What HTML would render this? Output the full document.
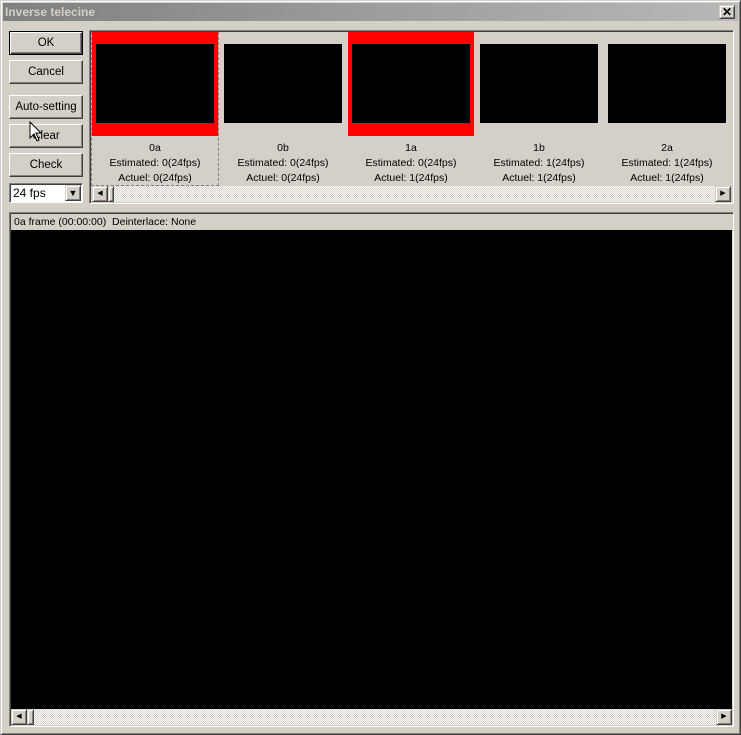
<html><head><style>
body{margin:0;width:741px;height:735px;background:#d4d0c8;font-family:"Liberation Sans",sans-serif;font-size:11px;position:relative;overflow:hidden}
.a{position:absolute}
.win{left:0;top:0;width:739px;height:733px;border:1px solid;border-color:#d4d0c8 #404040 #404040 #d4d0c8;box-shadow:inset 1px 1px #fff,inset -1px -1px #808080}
.title{left:3px;top:3px;width:735px;height:18px;background:linear-gradient(90deg,#808080,#b8b8b8);color:#d4d0c8;font-weight:bold;font-size:12px;line-height:18px;padding-left:2px;box-sizing:border-box}
.btn{left:9px;width:74px;height:24px;box-sizing:border-box;border:1px solid;border-color:#fff #404040 #404040 #fff;box-shadow:inset -1px -1px #808080;text-align:center;line-height:22px;font-size:11.5px}
.sunk{border:1px solid;border-color:#808080 #fff #fff #808080;box-shadow:inset 1px 1px #404040;box-sizing:border-box}
.thumb{width:128px;text-align:center;font-size:10.5px;line-height:15px}
.blk{background:#000}
.sb{background:repeating-conic-gradient(#fff 0 25%,#d4d0c8 0 50%) 0 0/2px 2px}
.sbtn{width:16px;height:16px;box-sizing:border-box;border:1px solid;border-color:#d4d0c8 #404040 #404040 #d4d0c8;box-shadow:inset 1px 1px #fff,inset -1px -1px #808080;background:#d4d0c8;font-size:7px;line-height:14px;text-align:center}
</style></head><body>
<div class="a win"></div>
<div class="a title">Inverse telecine</div>
<div class="a sbtn" style="left:719px;top:5px;width:16px;height:14px;font-size:12px;line-height:12px;font-weight:bold">✕</div>
<div class="a btn" style="top:31px;border:1px solid #000;box-shadow:inset 1px 1px #fff,inset -1px -1px #404040,inset -2px -2px #808080">OK</div>
<div class="a btn" style="top:60px">Cancel</div>
<div class="a btn" style="top:95px">Auto-setting</div>
<div class="a btn" style="top:124px">Clear</div>
<div class="a btn" style="top:153px">Check</div>
<div class="a" style="left:9px;top:183px;width:74px;height:20px;box-sizing:border-box;border:1px solid;border-color:#808080 #fff #fff #808080;background:#fff;box-shadow:inset 1px 1px #404040">
<span class="a" style="left:3px;top:2px;font-size:12px">24 fps</span>
<div class="a sbtn" style="right:1px;top:1px;font-size:9px">▼</div></div>
<div class="a sunk" style="left:89px;top:30px;width:645px;height:174px;overflow:hidden">
<div class="a" style="left:1px;top:1px;width:128px;height:154px;border:1px dashed #808080;box-sizing:border-box"></div>
<div class="a" style="left:2px;top:1px;width:126px;height:104px;background:red"></div>
<div class="a" style="left:258px;top:1px;width:126px;height:104px;background:red"></div>
<div class="a blk" style="left:6px;top:13px;width:118px;height:79px"></div>
<div class="a blk" style="left:134px;top:13px;width:118px;height:79px"></div>
<div class="a blk" style="left:262px;top:13px;width:118px;height:79px"></div>
<div class="a blk" style="left:390px;top:13px;width:118px;height:79px"></div>
<div class="a blk" style="left:518px;top:13px;width:118px;height:79px"></div>
<div class="a thumb" style="left:1px;top:110px">0a<br>Estimated: 0(24fps)<br>Actuel: 0(24fps)</div>
<div class="a thumb" style="left:129px;top:110px">0b<br>Estimated: 0(24fps)<br>Actuel: 0(24fps)</div>
<div class="a thumb" style="left:257px;top:110px">1a<br>Estimated: 0(24fps)<br>Actuel: 1(24fps)</div>
<div class="a thumb" style="left:385px;top:110px">1b<br>Estimated: 1(24fps)<br>Actuel: 1(24fps)</div>
<div class="a thumb" style="left:513px;top:110px">2a<br>Estimated: 1(24fps)<br>Actuel: 1(24fps)</div>
<div class="a sb" style="left:2px;top:155px;width:639px;height:16px"></div>
<div class="a sbtn" style="left:2px;top:155px">◀</div>
<div class="a sbtn" style="left:18px;top:155px;width:6px"></div>
<div class="a sbtn" style="left:625px;top:155px">▶</div>
</div>
<div class="a sunk" style="left:9px;top:212px;width:725px;height:515px">
<div class="a" style="left:4px;top:2px;font-size:10.5px;line-height:14px">0a frame (00:00:00)&nbsp; Deinterlace: None</div>
<div class="a blk" style="left:1px;top:17px;width:721px;height:479px"></div>
<div class="a sb" style="left:1px;top:496px;width:721px;height:16px"></div>
<div class="a sbtn" style="left:1px;top:496px">◀</div>
<div class="a sbtn" style="left:17px;top:496px;width:7px"></div>
<div class="a sbtn" style="left:706px;top:496px">▶</div>
</div>
<svg class="a" style="left:29px;top:121px" width="14" height="22"><path d="M1 1V17L5 13L8 20L10 19L7 12H12Z" fill="#fff" stroke="#000"/></svg>
</body></html>
